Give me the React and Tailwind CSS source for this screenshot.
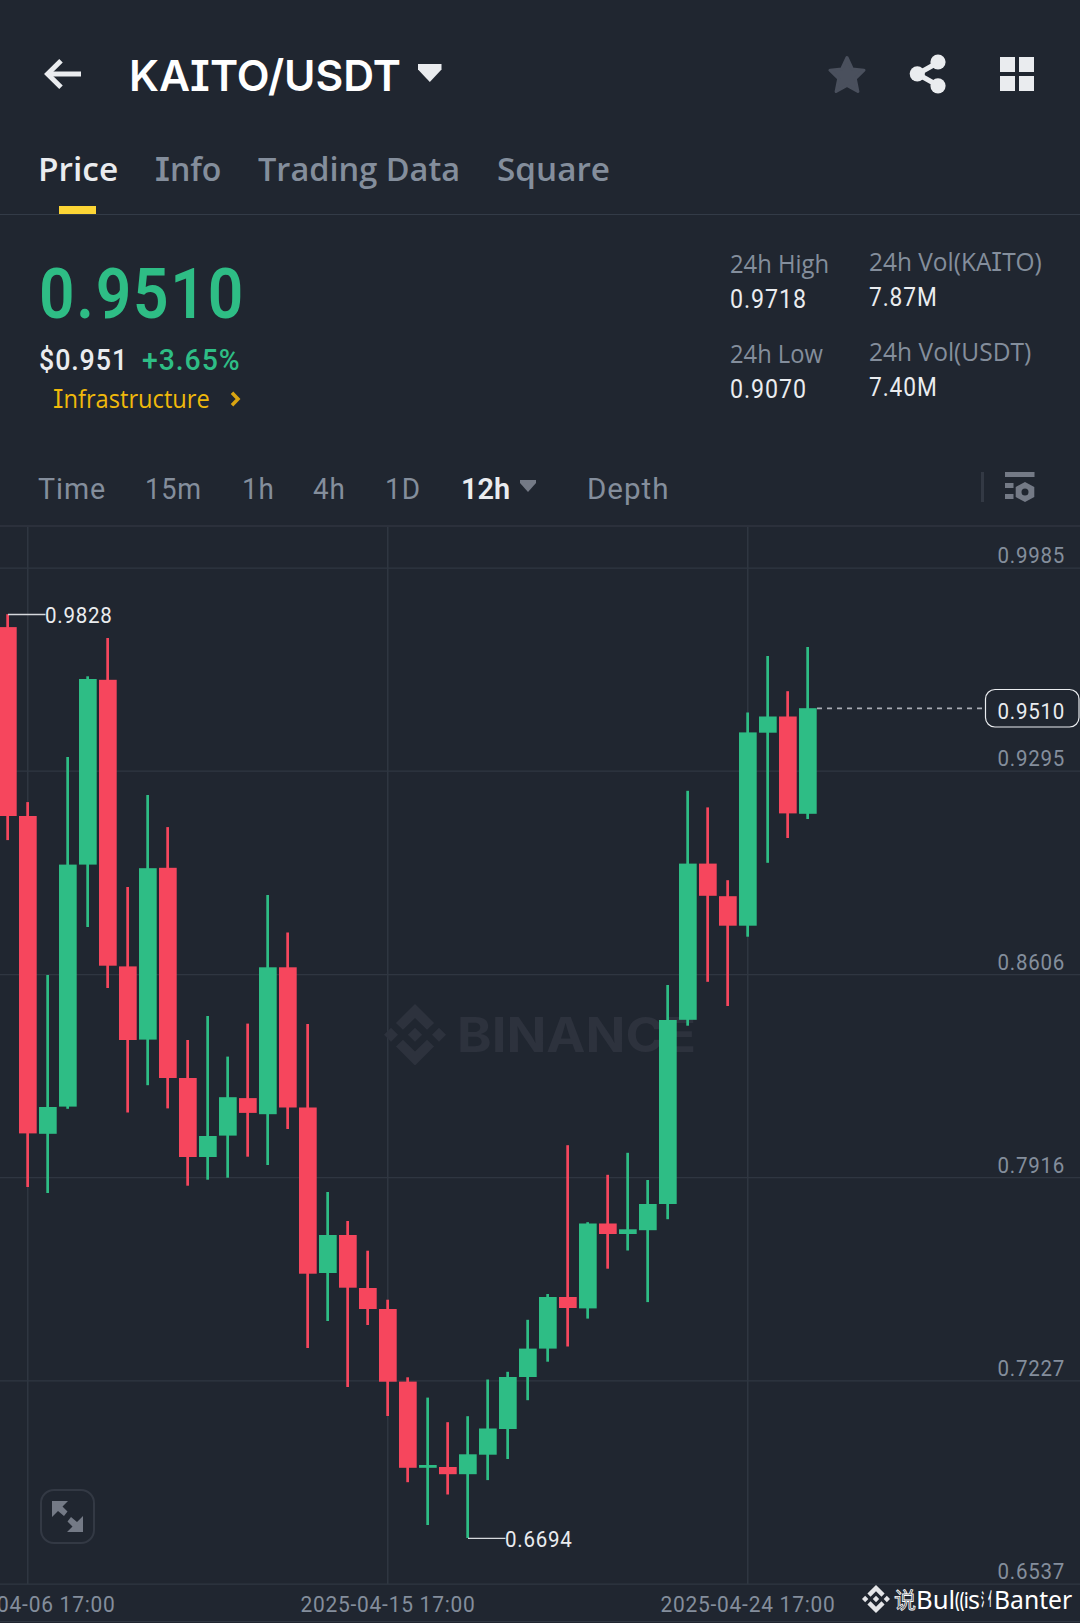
import React, { useLayoutEffect, useRef, useState } from "react";

const UP = "#2ebd85";
const DOWN = "#f6465d";
const GRID = "#2f3641";

const CHART_TOP = 526;

// [high, body top, body bottom, low, up]
const candles = [
  [614.2, 627.1, 816, 840.1, 0],
  [802.1, 816, 1133.4, 1187, 0],
  [975, 1107, 1133.8, 1193, 1],
  [757, 864.6, 1106.6, 1108.8, 1],
  [676.3, 679, 864.6, 927, 1],
  [638, 679.8, 965.7, 988, 0],
  [887, 966.4, 1040, 1112.5, 0],
  [795, 868.2, 1039.6, 1085.2, 1],
  [827.1, 867.8, 1078, 1108.4, 0],
  [1040, 1078, 1157, 1185.7, 0],
  [1016, 1136, 1157, 1179.7, 1],
  [1056.6, 1097.2, 1135.6, 1177.7, 1],
  [1023.6, 1098.1, 1112.9, 1156.7, 0],
  [895, 967.3, 1114.2, 1165, 1],
  [932.5, 967.3, 1107.5, 1129, 0],
  [1024, 1107.5, 1273.7, 1348, 0],
  [1192, 1235, 1273, 1321, 1],
  [1221, 1235, 1287.7, 1387, 0],
  [1250.7, 1288, 1309, 1325, 0],
  [1299.7, 1309, 1381.7, 1416, 0],
  [1377.3, 1381.6, 1467.8, 1482.2, 0],
  [1397.6, 1465, 1467.8, 1525, 1],
  [1422.2, 1467, 1474.2, 1494.5, 0],
  [1416.2, 1454.3, 1474.2, 1538, 1],
  [1379.5, 1428.5, 1454.7, 1480.1, 1],
  [1371.8, 1377, 1429, 1459, 1],
  [1319.8, 1348.6, 1377, 1400.2, 1],
  [1294, 1297, 1348.6, 1361.7, 1],
  [1145.2, 1297, 1308, 1346.5, 0],
  [1222.2, 1223.5, 1308.4, 1318.6, 1],
  [1174.8, 1223.5, 1234, 1268.7, 0],
  [1152.8, 1229.3, 1234, 1250.5, 1],
  [1180, 1204, 1230.2, 1302.1, 1],
  [985, 1020, 1204, 1219.2, 1],
  [790.8, 863.6, 1019.8, 1025.7, 1],
  [807.4, 863.6, 895.8, 981.8, 0],
  [880.2, 896.2, 925.7, 1006, 0],
  [712.5, 732.4, 925.7, 936.7, 1],
  [656, 716.5, 732.7, 862.8, 1],
  [691.2, 716.5, 813.4, 838, 0],
  [647, 708.2, 813.8, 819, 1],
];

const priceLines = [
  { y: 568, label: "0.9985" },
  { y: 771, label: "0.9295" },
  { y: 974.5, label: "0.8606" },
  { y: 1177.5, label: "0.7916" },
  { y: 1380.7, label: "0.7227" },
  { y: 1584, label: "0.6537" },
];

const dates = [
  { x: 28, label: "2025-04-06 17:00" },
  { x: 388, label: "2025-04-15 17:00" },
  { x: 748, label: "2025-04-24 17:00" },
];

// Stretches its text to an exact width
function Fit({ width, className = "", children }) {
  const ref = useRef(null);
  const [scale, setScale] = useState(1);

  useLayoutEffect(() => {
    if (ref.current) setScale(width / ref.current.offsetWidth);
  }, [width]);

  return (
    <span className={`block shrink-0 whitespace-nowrap leading-none ${className}`} style={{ width }}>
      <span ref={ref} className="inline-block origin-left" style={{ transform: `scaleX(${scale})` }}>
        {children}
      </span>
    </span>
  );
}

function SerifI() {
  return <span className="font-['Inter'] leading-none [font-feature-settings:'cv08']">I</span>;
}

function BinanceMark({ className }) {
  return (
    <svg viewBox="0 0 126.6 126.6" className={className} fill="currentColor" preserveAspectRatio="none">
      <path d="M38.7 53.2 63.3 28.6 87.9 53.2 102.2 38.9 63.3 0 24.4 38.9z" />
      <path d="M0 63.3 14.3 49 28.6 63.3 14.3 77.6z" />
      <path d="M38.7 73.4 63.3 98 87.9 73.4 102.2 87.7 63.3 126.6 24.4 87.7z" />
      <path d="M98 63.3 112.3 49 126.6 63.3 112.3 77.6z" />
      <path d="M77.8 63.3 63.3 48.8 48.8 63.3 63.3 77.8z" />
    </svg>
  );
}

function Header() {
  return (
    <header className="flex h-[150px] items-center pl-[44px] pr-[46px] text-[#eaecef]">
      <svg width="37" height="30" viewBox="0 0 37 30" fill="none" stroke="currentColor" strokeWidth="5" className="-mt-[2px]">
        <path d="M37 15H5" />
        <path d="M17 1.8 3.6 15 17 28.2" />
      </svg>
      <Fit width={272} className="ml-[48px] font-['Inter'] text-[43px] font-semibold text-white [font-feature-settings:'cv08']">
        KAITO/USDT
      </Fit>
      <svg width="24" height="18" viewBox="0 0 24 18" fill="currentColor" className="ml-[17px] -mt-1">
        <path d="M0 0h23.5v5.5L11.8 18 0 5.5z" />
      </svg>
      <div className="-mt-[2px] ml-auto flex items-center">
        <svg width="38" height="39" viewBox="0 0 38 39" fill="#4a505d" stroke="#4a505d" strokeWidth="3" strokeLinejoin="round">
          <path d="M19 2.5 24.3 14 36 15.2 27.3 23.6 29.9 36.5 19 30.5 8.1 36.5 10.7 23.6 2 15.2 13.7 14z" />
        </svg>
        <svg width="38" height="40" viewBox="0 0 38 40" fill="currentColor" className="ml-[43px]">
          <path d="M29 8.5 8.5 20 29 31.5" fill="none" stroke="currentColor" strokeWidth="5" />
          <circle cx="29" cy="8" r="7.600" />
          <circle cx="8.300" cy="19.800" r="7.600" />
          <circle cx="29" cy="31.800" r="7.600" />
        </svg>
        <div className="ml-[53px] grid grid-cols-2 gap-1">
          <span className="h-[15px] w-[15px] bg-[#eaecef]" />
          <span className="h-[15px] w-[15px] bg-[#eaecef]" />
          <span className="h-[15px] w-[15px] bg-[#eaecef]" />
          <span className="h-[15px] w-[15px] bg-[#eaecef]" />
        </div>
      </div>
    </header>
  );
}

function Tabs() {
  return (
    <nav className="flex h-[65px] border-b border-[#333b47] pl-[38px] pt-[2px] font-['Open_Sans'] text-[33px] font-semibold text-[#848e9c]">
      <div className="flex flex-col items-center justify-between">
        <Fit width={80} className="text-[#eaecef]">Price</Fit>
        <span className="mr-px h-2 w-[37px] bg-[#fcd535]" />
      </div>
      <Fit width={66} className="ml-[37px]"><SerifI />nfo</Fit>
      <Fit width={202} className="ml-[37px]">Trading Data</Fit>
      <Fit width={113} className="ml-[37px]">Square</Fit>
    </nav>
  );
}

function Stat({ label, labelWidth, value, valueWidth }) {
  return (
    <div className="flex flex-col gap-[11px]">
      <Fit width={labelWidth} className="h-[25px] font-['Open_Sans'] text-[25px] text-[#848e9c]">{label}</Fit>
      <Fit width={valueWidth} className="h-[25px] text-[25px] tracking-[1px] text-[#eaecef]">{value}</Fit>
    </div>
  );
}

function Summary() {
  return (
    <section className="flex h-[235px] pl-[39px]">
      <div className="pt-[43px]">
        <Fit width={206} className="h-[71px] text-[71px] font-semibold tracking-[2px] text-[#2ebd85]">0.9510</Fit>
        <div className="mt-[17px] flex h-[30px] text-[29.5px] font-medium">
          <Fit width={89} className="tracking-[1px] text-[#eaecef]">$0.951</Fit>
          <Fit width={99} className="ml-[14px] tracking-[1px] text-[#2ebd85]">+3.65%</Fit>
        </div>
        <div className="mt-[10px] flex h-[25px] pl-[14px] text-[#f0b90b]">
          <Fit width={157} className="font-['Open_Sans'] text-[25px]"><SerifI />nfrastructure</Fit>
          <svg width="11" height="16" viewBox="0 0 11 16" fill="none" stroke="#d9a411" strokeWidth="3.500" className="ml-5 mt-[5px]">
            <path d="M2 1.8 8 8 2 14.2" />
          </svg>
        </div>
      </div>
      <div className="ml-auto flex gap-[40px] pr-[38px]">
        <div className="flex flex-col gap-[29px] pt-[36px]">
          <Stat label="24h High" labelWidth={99} value="0.9718" valueWidth={77} />
          <Stat label="24h Low" labelWidth={93} value="0.9070" valueWidth={77} />
        </div>
        <div className="flex flex-col gap-[29px] pt-[34px]">
          <Stat label={<>24h Vol(KA<SerifI />TO)</>} labelWidth={173} value="7.87M" valueWidth={69} />
          <Stat label="24h Vol(USDT)" labelWidth={162} value="7.40M" valueWidth={69} />
        </div>
      </div>
    </section>
  );
}

function Intervals() {
  return (
    <section className="flex h-[77px] border-b-2 border-[#2b303b] pl-[38px] pt-[25px] text-[29.5px] text-[#848e9c]">
      <Fit width={68} className="tracking-[1px]">Time</Fit>
      <Fit width={57} className="ml-[39px] tracking-[1px]">15m</Fit>
      <Fit width={33} className="ml-[40px] tracking-[1px]">1h</Fit>
      <Fit width={33} className="ml-[38px] tracking-[1px]">4h</Fit>
      <Fit width={36} className="ml-[39px] tracking-[1px]">1D</Fit>
      <Fit width={49} className="ml-[40px] font-semibold text-[#eaecef]">12h</Fit>
      <svg width="16" height="12" viewBox="0 0 16 12" fill="#747a86" className="ml-[10px] mt-[5px]">
        <path d="M0 0h16v3L8 12 0 3z" />
      </svg>
      <Fit width={82} className="ml-[51px] tracking-[1px]">Depth</Fit>
      <span className="-mt-[3px] ml-auto h-[30px] w-[3px] bg-[#333944]" />
      <svg width="30" height="30" viewBox="0 0 30 30" fill="#747a86" className="-mt-[3px] ml-[21px] mr-[45px]">
        <path d="M0 0h29.500v5H0zM0 11h8.500v5H0zM0 22h8.500v5H0z" />
        <path fillRule="evenodd" d="M20 10l9.300 5v10L20 30l-9.300-5V15zM20 16.500a3.500 3.500 0 1 0 0 7 3.500 3.500 0 0 0 0-7z" />
      </svg>
    </section>
  );
}

function ChartLabel({ x, y, width, fill = "#848e9c", children }) {
  return (
    <text x={x} y={y} textLength={width} lengthAdjust="spacingAndGlyphs" fill={fill} fontSize="22" letterSpacing="0.8">
      {children}
    </text>
  );
}

function Chart() {
  return (
    <section className="relative h-[1096px]">
      <svg width="1080" height="1096" viewBox={`0 ${CHART_TOP + 1} 1080 1096`} className="block">
        {dates.map((d) => (
          <rect key={d.x} x={d.x - 1} y="527" width="1.500" height="1057" fill={GRID} />
        ))}
        {priceLines.map((p) => (
          <rect key={p.y} x="0" y={p.y - 0.5} width="1080" height="1.300" fill={GRID} />
        ))}
        <rect x="0" y="1621" width="1080" height="1" fill={GRID} />

        <g color="#2d323d">
          <svg x="384" y="1004" width="62" height="61.500">
            <BinanceMark className="h-full w-full" />
          </svg>
          <text
            x="457"
            y="1052"
            fontFamily="Inter"
            fontWeight="700"
            fontSize="47.500"
            fill="currentColor"
            textLength="239"
            lengthAdjust="spacingAndGlyphs"
          >
            BINANCE
          </text>
        </g>

        {candles.map(([high, top, bottom, low, up], i) => {
          const x = 8 + i * 20;
          const color = up ? UP : DOWN;
          return (
            <g key={i} fill={color}>
              <rect x={x - 1.7} y={high} width="2.700" height={low - high} />
              <rect x={x - 9} y={top} width="17.700" height={bottom - top} />
            </g>
          );
        })}

        {priceLines.map((p) => (
          <ChartLabel key={p.label} x={997.5} y={p.y - 5} width={67.5}>{p.label}</ChartLabel>
        ))}
        {dates.map((d) => (
          <ChartLabel key={d.label} x={d.x - 87.5} y={1612} width={175}>{d.label}</ChartLabel>
        ))}

        {/* high and low callouts */}
        <path d="M8 614.500h37.500M468 1538.300h37.500" stroke="#d5d8dc" strokeWidth="1.300" />
        <ChartLabel x={45} y={623} width={67.5} fill="#eaecef">0.9828</ChartLabel>
        <ChartLabel x={505} y={1547} width={67.5} fill="#eaecef">0.6694</ChartLabel>

        {/* last price */}
        <path d="M817 708.300H984" stroke="#a9adb5" strokeWidth="1.800" strokeDasharray="5 5" />
        <rect x="985.500" y="689.500" width="93.500" height="37.500" rx="9.500" fill="#202630" stroke="#eaecef" strokeWidth="1.200" />
        <ChartLabel x={997.5} y={719} width={67.5} fill="#eaecef">0.9510</ChartLabel>
      </svg>

      <button className="absolute bottom-[79px] left-[40px] flex h-[55px] w-[55px] items-center justify-center rounded-[14px] border-[2.5px] border-[#333944]">
        <svg width="31" height="31" viewBox="0 0 31 31" fill="#747a86">
          <path d="M0 0h16l-5.500 5.500 5 5-3.500 4.500-6-5L0 16z" />
          <path d="M31 31H15l5.500-5.500-5-5 3.500-4.500 6 5L31 15z" />
        </svg>
      </button>

      {/* account stamp */}
      <div className="absolute bottom-[10px] left-[862px] flex items-center text-white">
        <BinanceMark className="h-7 w-7 text-[#e4e5e8]" />
        <div className="ml-1 flex h-7 items-center font-['Noto_Sans','Noto_Sans_CJK_SC',sans-serif] text-[25px]">
          <Fit width={22} className="text-[22px] text-[#202630] [-webkit-text-stroke:0.8px_white]">说</Fit>
          <Fit width={39}>Bul</Fit>
          <Fit width={13} className="text-[22px] font-semibold">((i</Fit>
          <Fit width={12}>s</Fit>
          <Fit width={14} className="ml-px text-[18px] font-bold">氵亻</Fit>
          <Fit width={78} className="-ml-px">Banter</Fit>
        </div>
      </div>
    </section>
  );
}

export default function App() {
  return (
    <div className="h-[1623px] w-[1080px] overflow-hidden bg-[#202630] font-['Roboto',sans-serif]">
      <Header />
      <Tabs />
      <Summary />
      <Intervals />
      <Chart />
    </div>
  );
}
